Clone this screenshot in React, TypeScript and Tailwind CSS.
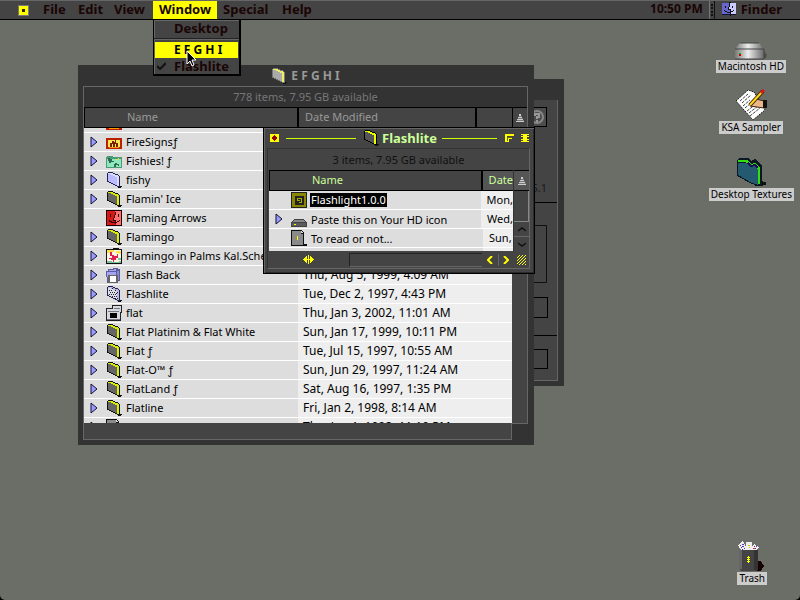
import type { ReactNode } from "react";

type FolderColors = { fill: string; edge: string; outline: string };

function Folder({ fill, edge, outline, dots = false }: FolderColors & { dots?: boolean }) {
  return (
    <svg width="16" height="16" viewBox="0 0 16 16" shapeRendering="crispEdges" aria-hidden="true">
      <path d="M11 14h5v1h-1v1h-3z" fill="#111" />
      <path d="M1 1h1V0h5v1h2v1h3v1h1v1h1v11h-3v-1H9v-1H7v-1H5v-1H3v-1H1z" fill={outline} />
      <path d="M2 2h4v1h2v1h3v1h1v9h-1v-1H9v-1H7v-1H5v-1H3V9H2z" fill={fill} />
      <path d="M2 1h5v1h2v1h3v1h1v10h-2V5H9V4H7V3H5V2H2z" fill={edge} />
      {dots && <path d="M3 4h1M5 4h1M4 6h1M6 6h1M8 6h1M3 8h1M5 8h1M7 8h1M9 8h1M4 10h1M6 10h1M8 10h1M10 10h1M9 12h1M11 12h1M10 7h1M6 2h1M9 4h1M11 6h1" transform="translate(0 .5)" stroke="#223" />}
    </svg>
  );
}

const dark: FolderColors = { fill: "#666666", edge: "#d8f000", outline: "#111111" };
const faded: FolderColors = { fill: "#aaaaaa", edge: "#eeee66", outline: "#777777" };
const active: FolderColors = { fill: "#555555", edge: "#e4ff00", outline: "#000000" };
const blue: FolderColors = { fill: "#bbbbff", edge: "#ddddff", outline: "#222255" };

function Pic({ children }: { children: ReactNode }) {
  return (
    <svg width="16" height="16" viewBox="0 0 16 16" shapeRendering="crispEdges" aria-hidden="true">
      {children}
    </svg>
  );
}

function RowIcon({ kind }: { kind: string }) {
  switch (kind) {
    case "fire":
      return (
        <Pic>
          <path d="M0 4h16v11H0z" fill="#b82000" />
          <path d="M2 6h12v7H2z" fill="#ffe850" />
          <path d="M4 13V9h2V7h2v1h1V6h1v3h2v4h-2v-3H9v3H7v-3H6v3z" fill="#7a2200" />
          <path d="M3 13h10v1H3z" fill="#ff9a00" />
        </Pic>
      );
    case "fish":
      return (
        <Pic>
          <path d="M1 3h6v1h9v11H0V4h1z" fill="#4b9c76" />
          <path d="M1 6h14v8H1z" fill="#8ee8bc" />
          <path d="M2 5h2v1h2v2h2v1H5v1H3V8H2zM9 10h2v1h2v2h-1v-1h-2v2H8v-3h1z" fill="#2f6a54" />
          <path d="M10 6h2v1h-2zM12 5h1v1h-1z" fill="#ffd83a" />
        </Pic>
      );
    case "arrows":
      return (
        <Pic>
          <path d="M0 0h16v16H0z" fill="#220000" />
          <path d="M1 1h14v14H1z" fill="#d41818" />
          <path d="M9 1h6v14h-5v-4H8V8h1V4z" fill="#ff7070" />
          <path d="M4 4h1v3H4zM12 4h1v3h-1zM9 2h1v3H9v3H8v2h2v4H9v-3H7V8h1V5h1zM3 10h1v1h2v1h5v-1h2v-1h1v1h-1v1h-2v1H5v-1H3z" fill="#330000" />
        </Pic>
      );
    case "palms":
      return (
        <Pic>
          <path d="M0 1h7V0h6v1h3v15H0z" fill="#111" />
          <path d="M1 2h14v13H1z" fill="#fff4e0" />
          <path d="M1 2h7v2H4v1H1zM10 3h5v3h-2V5h-3z" fill="#ffe14a" />
          <path d="M4 4h2v3h2v1h3V6h1v4h-2v2H8v2H7v-2H5v-1H3v-1h3V8H4z" fill="#e02050" />
          <path d="M1 13h5v1h7v-1h2v2H1zM12 10h3v2h-3z" fill="#7cc4a0" />
        </Pic>
      );
    case "back":
      return (
        <Pic>
          <path d="M0 4h2V2h5V1h5v1h2v12h-3v2H1z" fill="#5c5c9c" />
          <path d="M1 5h9v9H2zM3 3h5V2h2v2H3z" fill="#a4a4f0" />
          <path d="M11 4h2v9h-2z" fill="#8888dd" />
          <path d="M2 8h10v8H2z" fill="#666" />
          <path d="M4 9h6v6H4z" fill="#fff" />
        </Pic>
      );
    case "flat":
      return (
        <Pic>
          <path d="M6 0h10v8h-1v8H0V3h6z" fill="#222" />
          <path d="M7 1h8v6H7zM1 4h13v11H1z" fill="#d8d8de" />
          <path d="M8 3h6v1H8zM2 6h11v1H2zM1 14h13v1H1z" fill="#777784" />
          <path d="M4 8h7v5H4z" fill="#000" />
        </Pic>
      );
    case "app":
      return (
        <Pic>
          <path d="M0 0h16v16H0z" fill="#222" />
          <path d="M1 1h14v14H1z" fill="#888800" />
          <path d="M4 4h9v9H4z" fill="#222" />
          <path d="M6 6h5v5H8v-1h2V7H7v2H6zM7 8h2v1H7z" fill="#aaaa00" />
        </Pic>
      );
    case "drive":
      return (
        <Pic>
          <path d="M3 8h10v1h1v1h1v1h1v5H0v-5h1v-1h1V9h1z" fill="#444" />
          <path d="M3 9h10v1h1v1H2v-1h1z" fill="#888" />
          <path d="M1 12h14v3H1z" fill="#5c5c5c" />
          <path d="M3 13h2v1H3z" fill="#ffff00" />
        </Pic>
      );
    case "doc":
      return (
        <Pic>
          <path d="M0 0h11v1h1v1h1v12h3v2H0z" fill="#111" />
          <path d="M1 1h9v3h2v11H1z" fill="#8a8a8a" />
          <path d="M10 1h1v1h1v1h-2z" fill="#ddd" />
          <path d="M6 6h1v4H6z" fill="#ffff00" />
        </Pic>
      );
    case "blue":
      return <Folder {...blue} />;
    case "dotted":
      return <Folder {...blue} fill="#dddde8" edge="#bbbbdd" dots />;
    default:
      return <Folder {...dark} />;
  }
}

function Disclosure({ label }: { label: string }) {
  return (
    <button aria-label={`Expand ${label}`} className="block">
      <svg width="8" height="12" viewBox="0 0 8 12" aria-hidden="true">
        <path d="M1 1v10l6-5z" fill="#9a9aff" stroke="#111133" />
      </svg>
    </button>
  );
}

function SortIcon() {
  return (
    <svg width="8" height="8" viewBox="0 0 8 8" shapeRendering="crispEdges" aria-hidden="true">
      <path d="M3 0h2v2H3zM2 3h4v1H2zM1 5h6v1H1zM0 7h8v1H0z" fill="#cccccc" />
      <path d="M3 2h3v1H3zM2 4h5v1H2zM1 6h7v1H1z" fill="#777777" />
    </svg>
  );
}

type Entry = { name: string; icon: string; date?: string; expandable?: boolean };

const files: Entry[] = [
  { name: "", icon: "fire" },
  { name: "FireSignsƒ", icon: "fire", expandable: true },
  { name: "Fishies! ƒ", icon: "fish", expandable: true },
  { name: "fishy", icon: "blue", expandable: true },
  { name: "Flamin' Ice", icon: "dark", expandable: true },
  { name: "Flaming Arrows", icon: "arrows" },
  { name: "Flamingo", icon: "dark", expandable: true },
  { name: "Flamingo in Palms Kal.Scher", icon: "palms", expandable: true },
  { name: "Flash Back", icon: "back", date: "Thu, Aug 5, 1999, 4:09 AM", expandable: true },
  { name: "Flashlite", icon: "dotted", date: "Tue, Dec 2, 1997, 4:43 PM", expandable: true },
  { name: "flat", icon: "flat", date: "Thu, Jan 3, 2002, 11:01 AM", expandable: true },
  { name: "Flat Platinim & Flat White", icon: "dark", date: "Sun, Jan 17, 1999, 10:11 PM", expandable: true },
  { name: "Flat ƒ", icon: "dark", date: "Tue, Jul 15, 1997, 10:55 AM", expandable: true },
  { name: "Flat-O™ ƒ", icon: "dark", date: "Sun, Jun 29, 1997, 11:24 AM", expandable: true },
  { name: "FlatLand ƒ", icon: "dark", date: "Sat, Aug 16, 1997, 1:35 PM", expandable: true },
  { name: "Flatline", icon: "dark", date: "Fri, Jan 2, 1998, 8:14 AM", expandable: true },
  { name: "Flatliner ƒ", icon: "doc", date: "Thu, Jan 1, 1998, 11:10 PM", expandable: true },
];

const openFiles: Entry[] = [
  { name: "Flashlight1.0.0", icon: "app", date: "Mon," },
  { name: "Paste this on Your HD icon", icon: "drive", date: "Wed,", expandable: true },
  { name: "To read or not...", icon: "doc", date: "Sun," },
];

function InfoWindow() {
  return (
    <section aria-label="Information" className="absolute left-[300px] top-[79px] w-[264px] border-[6px] border-t-0 border-b-[5px] border-[#333] bg-[#333] text-[11px] leading-4">
      <div className="h-[21px]" />
      <div className="flex flex-col items-end border-r border-b border-[#666] bg-[#444] pb-[11px]">
        <button aria-label="Help" className="mr-[10px] mt-[7px] flex size-5 items-center justify-center border border-black bg-[#4c4c4c]">
          <svg width="15" height="15" viewBox="0 0 15 15" fill="none" aria-hidden="true">
            <circle cx="7" cy="7" r="6" stroke="#888" strokeWidth="2" />
            <path d="M5 6V4h4v3H7v2M7 10v2" stroke="#999" strokeWidth="2" />
          </svg>
        </button>
        <p className="mr-[10px] mt-[53px] text-[#1a1a1a]">8.5.1</p>
        <div className="mt-[6px] h-px w-full bg-black" />
        <div className="mr-[10px] mt-[22px] h-[58px] w-40 border border-[#111]" />
        <div className="mr-[9px] mt-[14px] h-[21px] w-40 border border-black" />
        <div className="mt-[17px] h-px w-full bg-black" />
        <div className="mr-[9px] mt-[13px] h-5 w-40 border border-black" />
      </div>
    </section>
  );
}

function FolderWindow() {
  return (
    <section aria-label="E F G H I" className="absolute left-[78px] top-[65px] w-[456px] bg-[#333] pl-[5px] pr-[6px] pb-[5px]">
      <header className="flex h-[21px] items-center justify-center gap-1 text-[#999]">
        <Folder {...faded} />
        <h2 className="text-[12px] font-bold leading-4">E F G H I</h2>
      </header>
      <p className="h-[21px] border border-b-0 border-[#666] text-center text-[11px] leading-5 text-[#777]">778 items, 7.95 GB available</p>
      <div className="flex">
        <div className="min-w-0 flex-1 border-b border-l border-[#666]">
          <table className="block text-left text-[11px] leading-[18px]">
            <thead className="block">
              <tr className="flex h-[21px] border border-r-0 border-black bg-[#444] text-[#999]">
                <th className="w-[214px] border-r-2 border-black pl-[42px] font-normal">Name</th>
                <th className="w-[178px] border-r-2 border-black pl-[6px] font-normal">Date Modified</th>
                <td className="flex-1" />
              </tr>
            </thead>
            <tbody className="flex h-[295px] flex-col justify-start overflow-hidden">
              {files.map(({ name, icon, date, expandable }, i) => (
                <tr key={name} className={`flex h-[19px] shrink-0 border-b border-white ${i === 0 ? "-mt-[14px]" : ""}`}>
                  <td className="flex w-[214px] items-center overflow-hidden whitespace-nowrap bg-[#ddd] pl-[6px]">
                    <span className="w-4">{expandable && <Disclosure label={name} />}</span>
                    <RowIcon kind={icon} />
                    <span className="pl-1 pb-px leading-[17px]">{name}</span>
                  </td>
                  <td className="flex-1 whitespace-nowrap bg-[#eee] pl-[5px] text-[12px] leading-[17px]">{date}</td>
                </tr>
              ))}
            </tbody>
          </table>
          <div className="h-4 border-r border-[#666] bg-[#444]" />
        </div>
        <div className="w-4 self-start border-r border-b border-[#666] bg-[#444]">
          <button aria-label="Reverse sort order" className="flex h-[21px] w-full items-center justify-center border border-r-0 border-black">
            <SortIcon />
          </button>
          <div className="h-[295px]" />
        </div>
      </div>
    </section>
  );
}

function ActiveWindow() {
  return (
    <section aria-label="Flashlite" className="absolute left-[263px] top-[127px] w-[272px] border border-black bg-[#444] pl-[3px] pr-1 pb-1 shadow-[inset_1px_1px_0_#666,inset_-1px_-1px_0_#2b2b2b]">
      <header className="flex h-[20px] items-center pl-[3px] pr-px">
        <button aria-label="Close" className="flex h-2 w-[9px] items-center justify-center bg-[#ffff00]">
          <svg width="5" height="6" viewBox="0 0 5 6" shapeRendering="crispEdges" aria-hidden="true">
            <path d="M2 0h1v1h1v1h1v2H4v1H3v1H2V5H1V4H0V2h1V1h1z" fill="#990000" />
          </svg>
        </button>
        <span className="ml-[7px] h-px flex-1 bg-[#ccff00]" />
        <span className="ml-[7px]"><Folder {...active} /></span>
        <h2 className="mx-[3px] text-[13px] font-bold leading-[18px] text-[#ccff99]">Flashlite</h2>
        <span className="ml-[2px] mr-2 h-px w-[55px] bg-[#ccff00]" />
        <button aria-label="Zoom" className="mr-[7px] block">
          <svg width="9" height="8" viewBox="0 0 9 8" shapeRendering="crispEdges" aria-hidden="true">
            <path d="M0 0h9v2H2v1h5v2H4v3H0z" fill="#ffff00" />
            <path d="M2 3h5v1H3v3H2z" fill="#666600" />
          </svg>
        </button>
        <button aria-label="Collapse" className="block">
          <svg width="8" height="8" viewBox="0 0 8 8" shapeRendering="crispEdges" aria-hidden="true">
            <path d="M0 0h8v1H0zM0 2h8v1H0zM0 5h8v1H0zM0 7h8v1H0zM2 1h4v6H2z" fill="#ffff00" />
          </svg>
        </button>
      </header>
      <div className="border-t border-l border-r border-t-[#333] border-l-[#333] border-r-[#666] border-b border-b-[#666]">
        <p className="h-[21px] text-center text-[11px] leading-[22px] text-[#111]">3 items, 7.95 GB available</p>
        <div className="flex pl-px">
          <table className="block min-w-0 flex-1 text-left text-[11px] leading-[18px]">
            <thead className="block">
              <tr className="flex h-[21px] border border-r-0 border-black text-[#ccff99]">
                <th className="w-[214px] border-r-2 border-black pl-[42px] font-normal">Name</th>
                <th className="flex-1 bg-[#555] pl-[6px] font-normal">Date</th>
              </tr>
            </thead>
            <tbody className="block h-[60px] overflow-hidden bg-[#eee]">
              {openFiles.map(({ name, icon, date, expandable }, i) => (
                <tr key={name} className="flex h-[19px] border-b border-white leading-[17px]">
                  <td className="flex w-[214px] items-center bg-[#ddd] pl-[6px]">
                    <span className="w-4">{expandable && <Disclosure label={name} />}</span>
                    <RowIcon kind={icon} />
                    <span className={i === 0 ? "ml-[3px] bg-black px-px leading-[14px] text-white" : "ml-1"}>{name}</span>
                  </td>
                  <td className="flex-1 bg-[#eee] pl-[6px]">{date}</td>
                </tr>
              ))}
              <tr className="flex h-1"><td className="w-[214px] bg-[#ddd]" /></tr>
            </tbody>
          </table>
          <div className="flex w-4 flex-col border-l border-[#333]">
            <button aria-label="Reverse order" className="flex h-[21px] items-center justify-center border-y border-black bg-[#555]">
              <SortIcon />
            </button>
            <div className="h-[31px] border-r border-b border-[#888]" />
            <button aria-label="Scroll up" className="flex h-[14px] items-center justify-center">
              <svg width="8" height="5" viewBox="0 0 8 5" aria-hidden="true"><path d="M0 4l4-3 4 3" fill="none" stroke="#111" strokeWidth="1.5" /></svg>
            </button>
            <button aria-label="Scroll down" className="flex h-[15px] items-center justify-center border-t border-[#666]">
              <svg width="8" height="5" viewBox="0 0 8 5" aria-hidden="true"><path d="M0 1l4 3 4-3" fill="none" stroke="#111" strokeWidth="1.5" /></svg>
            </button>
          </div>
        </div>
        <div className="flex h-[17px] items-center">
          <div className="flex w-[81px] justify-center">
            <svg width="11" height="9" viewBox="0 0 11 9" shapeRendering="crispEdges" aria-hidden="true">
              <path d="M0 4h1V3h1V2h1V1h1v7H3V7H2V6H1V5H0zM5 0h1v9H5zM7 1h1v1h1v1h1v1h1v1h-1v1H9v1H8v1H7zM4 4h3v1H4z" fill="#ffff00" />
            </svg>
          </div>
          <div className="h-[14px] flex-1 border-t border-b border-l border-t-[#222] border-l-[#222] border-b-[#666]" />
          <button aria-label="Scroll left" className="flex h-3 w-4 items-center justify-center">
            <svg width="6" height="8" viewBox="0 0 6 8" aria-hidden="true"><path d="M5 0L1 4l4 4" fill="none" stroke="#ffff00" strokeWidth="2" /></svg>
          </button>
          <button aria-label="Scroll right" className="flex h-3 w-[15px] items-center justify-center border-l border-[#666]">
            <svg width="6" height="8" viewBox="0 0 6 8" aria-hidden="true"><path d="M1 0l4 4-4 4" fill="none" stroke="#ffff00" strokeWidth="2" /></svg>
          </button>
          <div className="flex w-4 justify-end pr-[3px]">
            <svg width="9" height="10" viewBox="0 0 9 10" aria-hidden="true">
              <path d="M0 3l3-3M0 6l6-6M0 9l9-9M2 10l7-7M5 10l4-4M8 10l1-1" stroke="#ffff00" />
            </svg>
          </div>
        </div>
      </div>
    </section>
  );
}

function MenuBar() {
  return (
    <nav aria-label="Menu bar" className="relative flex h-5 items-center border-t border-b border-t-[#666] border-b-black bg-[#444] text-[13px] font-bold leading-4 text-[#1a0505]">
      <button aria-label="Apple menu" className="ml-[18px] mr-2 flex size-[11px] items-center justify-center border border-[#777] bg-[#ffff00]">
        <span className="flex size-[7px] items-center justify-center">
          <span className="size-[3px] bg-[#332200]" />
        </span>
      </button>
      <button className="h-full w-[35px] pb-[2px] pl-[6px] text-left">File</button>
      <button className="h-full w-9 pb-[2px] pl-[6px] text-left">Edit</button>
      <button className="h-full w-[45px] pb-[2px] pl-[6px] text-left">View</button>
      <button aria-expanded="true" className="h-full w-16 bg-[#ffff00] pb-[2px] pl-[6px] text-left">Window</button>
      <button className="h-full w-[59px] pb-[2px] pl-[6px] text-left">Special</button>
      <button className="h-full pb-[2px] pl-[6px]">Help</button>
      <time className="ml-auto pb-[2px] text-[12px]">10:50 PM</time>
      <span className="ml-[6px] mr-[6px] flex h-full w-[6px] items-center justify-center border-l border-r border-l-[#777] border-r-[#111]">
        <span className="h-3 border-l-2 border-dotted border-[#111]" />
      </span>
      <button className="mr-[18px] flex h-full items-center gap-1 pb-[2px]">
        <svg width="16" height="16" viewBox="0 0 16 16" shapeRendering="crispEdges" aria-hidden="true">
          <path d="M1 2h14v12H1z" fill="#111133" />
          <path d="M1 2h7v4H7v3h2v4H1z" fill="#6666cc" />
          <path d="M9 2h6v11h-5V8H8V6h1z" fill="#ccccff" />
          <path d="M4 5h1v2H4zM11 5h1v2h-1zM3 9h1v1h2v1h4v-1h2V9h1v1h-1v1h-2v1H6v-1H4v-1H3zM8 1h2v1H9v3H8v3h2v1H7V6h1zM9 12h1v3H9z" fill="#111" />
        </svg>
        Finder
      </button>
    </nav>
  );
}

function WindowMenu() {
  return (
    <div role="menu" className="absolute left-[153px] top-5 flex w-[88px] flex-col border border-r-2 border-b-2 border-t-0 border-black bg-[#444] text-[13px] font-bold leading-4 text-[#1a0505] shadow-[inset_1px_1px_0_#666]">
      <button role="menuitem" className="h-[18px] pb-[2px] pl-5 text-left">Desktop</button>
      <div className="mb-[3px] h-px bg-[#222] shadow-[0_1px_0_#666]" />
      <button role="menuitem" className="mx-px h-4 bg-[#ffff00] pl-[19px] text-left text-[12px] text-black">E F G H I</button>
      <button role="menuitemradio" aria-checked="true" className="flex h-4 items-center pb-px pl-[3px]">
        <svg width="9" height="8" viewBox="0 0 9 8" aria-hidden="true"><path d="M0 4l3 3 6-6" fill="none" stroke="#111" strokeWidth="2" /></svg>
        <span className="pl-2">Flashlite</span>
      </button>
    </div>
  );
}

function DesktopItem({ place, label, children }: { place: string; label: string; children: ReactNode }) {
  return (
    <button className={`absolute flex flex-col items-center ${place}`}>
      {children}
      <span className="whitespace-nowrap bg-[#ccc] px-[2px] text-[10px] leading-[13px] text-black">{label}</span>
    </button>
  );
}

export default function App() {
  return (
    <div className="min-h-screen bg-black font-['Noto_Sans','DejaVu_Sans',sans-serif]">
      <main className="relative min-h-screen overflow-hidden rounded-b-[5px] bg-[#6b6e66] text-black">
        <MenuBar />
        <InfoWindow />
        <FolderWindow />
        <ActiveWindow />
        <WindowMenu />

        <DesktopItem place="right-[14px] top-[42px]" label="Macintosh HD">
          <svg width="32" height="18" viewBox="0 0 32 18" aria-hidden="true">
            <defs>
              <linearGradient id="drive"><stop stopColor="#777" /><stop offset=".45" stopColor="#eee" /><stop offset="1" stopColor="#666" /></linearGradient>
            </defs>
            <path d="M28 8l4 5-1 3-4 1z" fill="#4c4e49" />
            <path d="M0 7l5-6h19l5 6v10H0z" fill="url(#drive)" />
            <path d="M5 1h19M0 7h29" stroke="#444" />
            <path d="M0 17h29V7" fill="none" stroke="#444" />
            <path d="M4 11h2v1H4z" fill="#0c0" /><path d="M4 12h2v2H4z" fill="#c00" />
          </svg>
        </DesktopItem>
        <DesktopItem place="right-[17px] top-[89px]" label="KSA Sampler">
          <svg width="33" height="32" viewBox="0 0 33 32" aria-hidden="true">
            <path d="M1 12L13 1l6 2 11 18-12 10z" fill="#fff" stroke="#111" strokeDasharray="1.5 1" />
            <path d="M5 12l8-7M7 14l9-8M8 17l7-6M10 19l6-5M12 22l9-7M14 24l9-7M15 27l10-8" stroke="#444" strokeDasharray="3 1" />
            <path d="M16 15l5-5 8 2v7l-7-1-7-1z" fill="#eab78c" stroke="#442211" />
            <path d="M28 11h4v8h-4z" fill="#111" />
            <path d="M15 16L28 2" stroke="#402000" strokeWidth="4" />
            <path d="M15 16L27 3" stroke="#ffd91a" strokeWidth="2" />
            <path d="M26 4l3-3" stroke="#e01818" strokeWidth="3" />
          </svg>
        </DesktopItem>
        <DesktopItem place="right-[6px] top-[157px]" label="Desktop Textures">
          <svg width="31" height="31" viewBox="0 0 31 31" shapeRendering="crispEdges" aria-hidden="true">
            <path d="M22 24h5v1h3v3h-3v1h-8z" fill="#111" />
            <path d="M1 3l2-2h9l3 3 4-2 7 6v20l-3 1-7-2-15-8z" fill="#0b1722" />
            <path d="M2 6h8l4 4 5-1 3 3v16l-6-2L2 18z" fill="#235a70" />
            <path d="M2 3h9l4 4 4-1 5 5v16h-2V13l-4-4-4 1-5-5H2z" fill="#33dd11" />
            <path d="M12 6l3 3 4-1 3 3" fill="none" stroke="#151055" strokeWidth="2" />
          </svg>
        </DesktopItem>
        <DesktopItem place="right-[33px] bottom-[15px]" label="Trash">
          <svg width="28" height="31" viewBox="0 0 28 31" shapeRendering="crispEdges" aria-hidden="true">
            <path d="M18 30h5l3-5-3-5h-4z" fill="#160404" />
            <path d="M0 4l5-4 4 8-5 3zM8 1h6v9H8zM13 8l3-5 5 3-3 5z" fill="#eee" />
            <path d="M2 4h1M4 3h1M3 6h1M5 5h1M4 8h1M6 7h1M4 5h1M5 3h1M16 5h1M17 7h1M18 5h1" stroke="#5533aa" />
            <path d="M10 4h2M11 6h1" stroke="#cccc00" />
            <path d="M15 7h2M16 9h1" stroke="#dd3333" />
            <path d="M1 9h19v19l-2 2H3l-2-2z" fill="#444" />
            <path d="M1 9h3v19H1z" fill="#666" /><path d="M16 9h4v20h-4z" fill="#333" />
            <path d="M10 15h1v7h-1zM9 16h3v1H9zM9 18h3v1H9zM9 20h3v1H9z" fill="#ffff00" />
          </svg>
        </DesktopItem>

        <svg className="pointer-events-none absolute left-[186px] top-[50px]" width="12" height="18" viewBox="0 0 12 18" aria-hidden="true">
          <path d="M1 1v13l3-3 2 5 2-1-2-5h4z" fill="#000" stroke="#fff" />
        </svg>
      </main>
    </div>
  );
}
